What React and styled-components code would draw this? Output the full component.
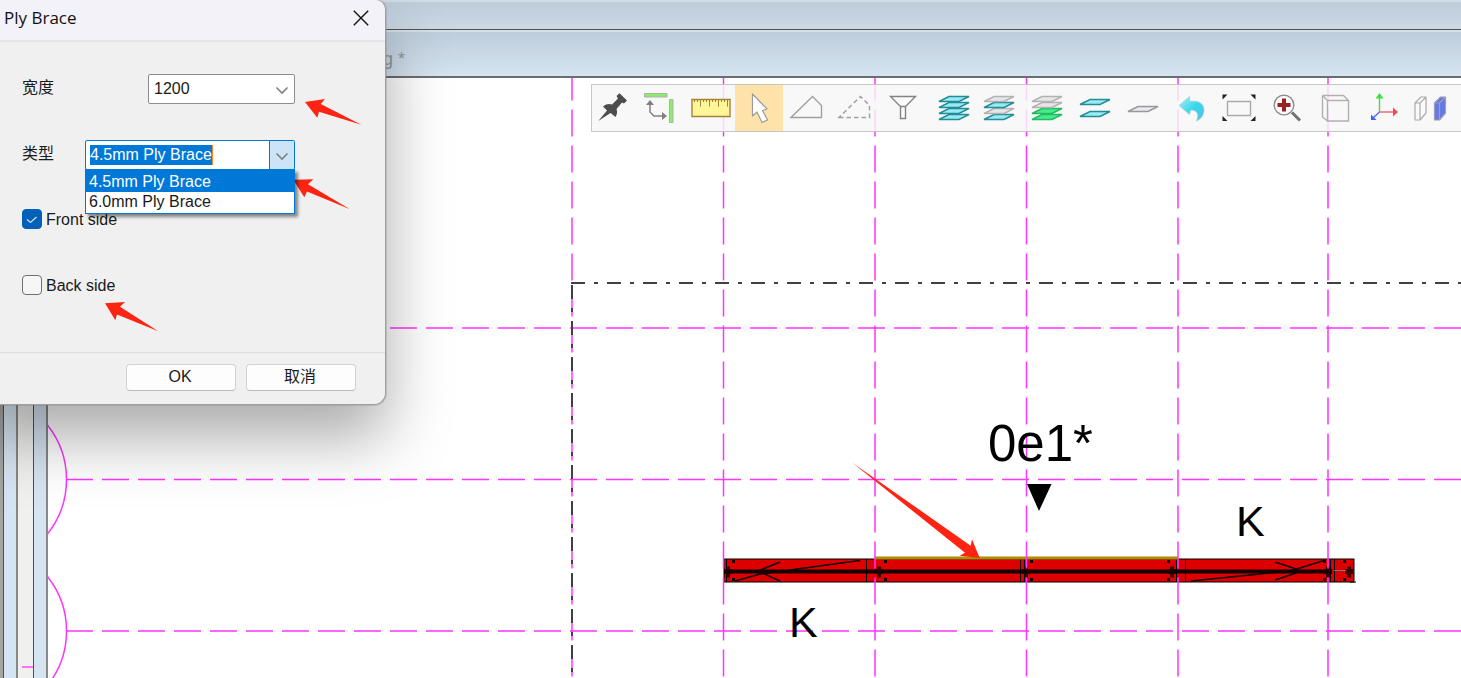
import React, { useEffect, useRef } from "react";
import styled, { createGlobalStyle } from "styled-components";

const Global = createGlobalStyle`
  * { box-sizing: border-box; }
  body { margin: 0; overflow: hidden; background: #fff; }
  body, button, input, select {
    font-family: "Liberation Sans", "Noto Sans CJK SC", sans-serif;
    font-size: 16px;
    line-height: 20px;
    color: #1a1a1a;
  }
`;

const Page = styled.main`
  position: relative;
  display: flex;
  flex-direction: column;
  height: 100vh;
  overflow: hidden;
`;

const OuterBar = styled.div`
  height: 30px;
  border-top: 2px solid #d3dbe3;
  border-bottom: 1px solid #4f5357;
  background: linear-gradient(#becddb, #ccd9e5);
`;

const DocumentBar = styled.header`
  display: flex;
  align-items: flex-end;
  height: 48px;
  padding: 0 0 5px 383px;
  border-top: 2px solid #d6dfe8;
  border-bottom: 2px solid #6b6e70;
  background: linear-gradient(#becddb, #d6e4f1);
  color: #93979d;
  font-size: 18px;
  line-height: 24px;
`;

const Body = styled.div`
  display: flex;
  flex: 1;
  min-height: 0;
`;

const Edge = styled.div`
  width: 3px;
  background: #a3a4a1;
`;

const Rail = styled.div`
  width: ${(p) => p.$width}px;
  border-left: 1px solid #4c5054;
  border-right: ${(p) => p.$right}px solid #858886;
  background: #d5e4f1;
`;

const Gutter = styled.div`
  display: flex;
  flex-direction: column;
  justify-content: flex-end;
  align-items: flex-end;
  width: 15px;
  padding-bottom: 10px;
  background: #f0f0ee;
`;

const GutterMark = styled.div`
  width: 11px;
  height: 2px;
  background: #ff70ff;
`;

const Canvas = styled.section`
  position: relative;
  flex: 1;
  min-width: 0;
  background: #fff;
`;

const Drawing = styled.svg`
  position: absolute;
  inset: 0;
  width: 100%;
  height: 100%;
  font-family: "Liberation Sans", sans-serif;
`;

const Toolbar = styled.div`
  position: absolute;
  top: 6px;
  left: 543px;
  right: -1px;
  display: flex;
  height: 48px;
  padding: 1px 0;
  overflow: hidden;
  background: rgba(247, 247, 247, 0.84);
  box-shadow: inset 0 0 0 1px #c6c6c6;
`;

const ToolButton = styled.button`
  flex: none;
  width: 48px;
  height: 46px;
  padding: 0;
  border: 0;
  background: ${(p) => (p.$active ? "#ffe2a9" : "transparent")};
  svg { display: block; }
`;

const Dialog = styled.form`
  position: absolute;
  top: 0;
  left: -24px;
  width: 410px;
  padding-left: 24px;
  border: solid #a0a0a0;
  border-width: 0 1px 1px 0;
  border-radius: 0 10px 12px 0;
  background: #f0f0f0;
  box-shadow: 0 0 0 1px rgba(130, 130, 130, 0.3), 0 32px 64px rgba(0, 0, 0, 0.34);
`;

const TitleBar = styled.div`
  display: flex;
  align-items: center;
  justify-content: space-between;
  height: 42px;
  padding: 0 16px 5px 4px;
  border-bottom: 2px solid #e5e5e7;
  border-radius: 0 10px 0 0;
  background: #f3f2f9;
`;

const Title = styled.h1`
  margin: 0;
  font: 400 17px/24px "Open Sans", sans-serif;
  color: #111;
`;

const CloseButton = styled.button`
  display: flex;
  padding: 0;
  border: 0;
  background: transparent;
`;

const Fields = styled.div`
  padding: 14px 90px 32px 22px;
`;

const FieldRow = styled.div`
  display: flex;
  align-items: center;
  justify-content: space-between;
  height: 66px;
`;

const FieldLabel = styled.label`
  padding-bottom: 3px;
`;

const SelectBox = styled.div`
  position: relative;
  width: 147px;
  height: 30px;
  svg { position: absolute; right: 6px; top: 12px; pointer-events: none; }
`;

const Select = styled.select`
  width: 100%;
  height: 100%;
  padding: 0 5px 0;
  appearance: none;
  border: 1px solid #8d8d8d;
  border-radius: 2px;
  background: #fff;
`;

const Combo = styled.div`
  position: relative;
  display: flex;
  width: 210px;
  height: 30px;
  border: 1px solid #0078d4;
  border-radius: 2px;
  background: #fff;
`;

const ComboInput = styled.input`
  flex: 1;
  min-width: 0;
  padding: 0 0 0 4px;
  border: 0;
  outline: 0;
  background: transparent;
  &::selection { background: #0078d7; color: #fff; }
`;

const Caret = styled.span`
  position: absolute;
  left: 126px;
  top: 4px;
  width: 1px;
  height: 20px;
  background: #ff8728;
`;

const ComboButton = styled.button`
  display: flex;
  align-items: center;
  justify-content: center;
  width: 25px;
  padding: 2px 0 0;
  border: 0;
  border-left: 1px solid #0078d4;
  background: #cce4f7;
`;

const Options = styled.ul`
  position: absolute;
  z-index: 1;
  top: 28px;
  left: -1px;
  right: -1px;
  margin: 0;
  padding: 0;
  border: 1px solid #0078d7;
  background: #fff;
  box-shadow: 3px 3px 3px rgba(0, 0, 0, 0.45);
  list-style: none;
`;

const Option = styled.li`
  padding: ${(p) => (p.$active ? "2px 3px 0" : "0 3px 1px")};
  background: ${(p) => (p.$active ? "#0078d7" : "#fff")};
  color: ${(p) => (p.$active ? "#fff" : "#1a1a1a")};
`;

const CheckLabel = styled.label`
  display: flex;
  align-items: center;
  gap: 4px;
  height: 66px;
  padding-bottom: 4px;
`;

const CheckText = styled.span`
  padding-top: 2px;
`;

const Checkbox = styled.input`
  width: 20px;
  height: 20px;
  margin: 0;
  appearance: none;
  border: 1px solid #6f6f6f;
  border-radius: 4px;
  background: #f6f6f6;
  &:checked {
    border-color: #005fb8;
    background: #005fb8;
  }
`;

const CheckBoxWrap = styled.span`
  position: relative;
  display: flex;
  svg { position: absolute; left: 0; top: 0; pointer-events: none; }
`;

const Footer = styled.div`
  display: flex;
  justify-content: flex-end;
  gap: 10px;
  padding: 11px 29px 13px 0;
  border-top: 1px solid #dcdcdc;
`;

const DialogButton = styled.button`
  width: 110px;
  height: 27px;
  padding: 0 2px 1px 0;
  border: 1px solid #d2d2d2;
  border-bottom-color: #bdbdbd;
  border-radius: 4px;
  background: #fdfdfd;
`;

const Annotations = styled.svg`
  position: absolute;
  inset: 0;
  width: 100%;
  height: 100%;
  pointer-events: none;
  fill: #ff2312;
`;

const Chevron = () => (
  <svg width="14" height="9" viewBox="0 0 14 9" fill="none" stroke="#808080" strokeWidth="1.6">
    <path d="M1.500 1.500 7 7 12.500 1.500" />
  </svg>
);

const TEAL = ["#9be9f3", "#238d96"];
const GREY = ["#e6e6e8", "#b3b3b3"];
const GREEN = ["#3ff08a", "#25b862"];

const Sheet = ({ x = 9, y, tone }) => (
  <path d={`M${x} ${y + 5}L${x + 10} ${y}H${x + 30}L${x + 20} ${y + 5}Z`} fill={tone[0]} stroke={tone[1]} strokeWidth="1.4" />
);

const Stack = ({ x, tones }) => tones.map((tone, i) => ({ tone, i })).reverse().map(({ tone, i }) => (
  <Sheet key={i} x={x} y={11.5 + i * 6} tone={tone} />
));

const rulerTicks = Array.from({ length: 12 }, (_, i) => `M${7.5 + i * 3} 14V${i % 3 === 2 ? 21.5 : 17}`).join("");

const tools = [
  ["Pin", <path d="M7.3 36 16 25.5 12 21.5Q16 18 21 19.5L27 13.500 25.500 11 28.500 8.300 36 15.500 33 18.500 31 17.500 25.500 24Q27 28 24.500 32L19.500 28Z" fill="#4d4d4d" />],
  ["Align", <g>
    <path d="M5.500 8.500h22.500v3.500h-22.500zM30.500 14.500h3.500v23h-3.500z" fill="#8ced68" stroke="#a9b5a5" />
    <path d="M11 19v8l4 4h9" fill="none" stroke="#808080" strokeWidth="1.5" />
    <path d="M7 20 11 15 15 20ZM23 27 28 31 23 35Z" fill="#808080" />
  </g>],
  ["Measure", <g>
    <path d="M5 14.500H43V31.500H5Z" fill="#fff797" stroke="#a5813b" strokeWidth="1.400" />
    <path d={rulerTicks} stroke="#a5813b" fill="none" />
  </g>],
  ["Select", <path d="M17.500 9V31L22 27 27 37.500 32.500 35 27.500 25.500 32 24Z" fill="#fff" stroke="#9b9b9b" strokeWidth="1.200" strokeLinejoin="round" />],
  ["Shape", <path d="M8 32.500 29.500 11.500 38.500 20.500V32.500Z" fill="none" stroke="#a0a0a0" strokeWidth="1.400" />],
  ["Dashed shape", <path d="M8 32.500H38.500V20.500L29.500 11.500Z" fill="none" stroke="#a0a0a0" strokeWidth="1.500" strokeDasharray="4.500 3" />],
  ["Filter", <path d="M11.500 11.500H36.500L26.500 21.500V33.500H21.500V21.500ZM21.500 21.500H26.500" fill="#fbfbfb" stroke="#838383" strokeWidth="1.400" />],
  ["All layers", <Stack x={12} tones={[TEAL, TEAL, TEAL, TEAL]} />],
  ["Alternate layers", <Stack x={9} tones={[GREY, TEAL, GREY, TEAL]} />],
  ["Lower layers", <Stack x={9} tones={[GREY, GREY, GREEN, GREEN]} />],
  ["Two layers", <g><Sheet y={14.500} tone={TEAL} /><Sheet y={26.500} tone={TEAL} /></g>],
  ["One layer", <Sheet y={21.500} tone={["#e9e9ee", "#999"]} />],
  ["Undo", <g>
    <defs><linearGradient id="undo" x1="0" y1="0" x2="1" y2="1"><stop stopColor="#b5eff7" /><stop offset=".5" stopColor="#36d9ec" /><stop offset="1" stopColor="#55bfe0" /></linearGradient></defs>
    <path d="M12 20.500 22.500 11.500 23 16.500C32 15 37 19 37 25 37 30 34 34 29.500 36 32.500 29 30 25 23.500 25L22.500 29.500Z" fill="url(#undo)" stroke="#a6cfdf" strokeWidth=".8" strokeLinejoin="round" />
  </g>],
  ["Fit to window", <g>
    <path d="M12.500 16.500H35.500V30.500H12.500Z" fill="none" stroke="#aaa" strokeWidth="1.400" />
    <path d="M7.500 9.500h5l-5 5ZM40.500 9.500v5l-5-5ZM7.500 36v-5l5 5ZM40.500 36h-5l5-5Z" fill="#222" />
  </g>],
  ["Zoom in", <g>
    <path d="M29 27.500 37 35.500" stroke="#707070" strokeWidth="3" />
    <circle cx="21" cy="20" r="9.800" fill="#fafafa" stroke="#888" strokeWidth="1.300" />
    <path d="M21 13.500V26.500M14.500 20H27.500" stroke="#9c2020" strokeWidth="4" />
  </g>],
  ["Box view", <path d="M16.500 15.500H37.500V36H16.500ZM11.500 10.500H32.500L37.500 15.500M11.500 10.500V32L16.500 36M11.500 10.500 16.500 15.500" fill="none" stroke="#b0b0b0" strokeWidth="1.400" />],
  ["Axes", <g strokeWidth="1.400">
    <path d="M20.500 27V12" stroke="#48d94c" /><path d="M16.500 13.500 20.500 8 24.500 13.500Z" fill="#39e442" />
    <path d="M20.500 27H35" stroke="#ee5f6d" /><path d="M34 22.500 39 27 34 31.500Z" fill="#f54556" />
    <path d="M20.500 27 14 33" stroke="#4a6cf0" /><path d="M12 29.500V35H17.500Z" fill="#4062ee" />
  </g>],
  ["Panels", <g strokeWidth="1.200" strokeLinejoin="round">
    <path d="M8 18 14 12H19V28L13 35H8ZM8 18H13V35M13 18 19 12" fill="#fafafa" stroke="#aaa" />
    <path d="M27.500 18 33.500 12H38.500V28L32.500 35H27.500ZM27.500 18H32.500V35M32.500 18 38.500 12" fill="#6579e4" stroke="#9a9eb8" />
  </g>],
];

const columns = [572, 723.5, 875, 1026.5, 1178, 1328];

const beamJoints = [728, 879, 1026, 1172, 1328, 1349];
const beamBolts = [733, 885, 1031, 1168, 1324, 1344];

function Plan() {
  return (
    <Drawing aria-label="Plan">
      <g transform="translate(-48 -78)">
        <rect x="724" y="559" width="630" height="23" fill="#de0000" stroke="#000" />
        <path d="M724 571.500H1331" stroke="#140000" strokeWidth="4" />
        <path d="M726.500 559V582M866.500 559V582M1020.500 559V582M1024.500 559V582M1176.500 559V582M1185.500 559V582M1330.500 559V582M1334.500 559V582" stroke="#000" />
        <path d="M735 581 760 574 860 560.500M758 571 780 562M762 573 780 581M1191 581 1290 571 1324 560.500M1275 562 1296 569M1275 580 1296 573" fill="none" stroke="#100000" strokeWidth="1.500" />
        {beamJoints.map((x) => <path key={x} d={`M${x - 2} 566.500h4v11h-4zM${x - 4} 569h8v5h-8z`} fill="#160000" opacity=".8" />)}
        {beamBolts.map((x) => <path key={x} d={`M${x - 1} 560h3v3h-3zM${x - 1} 578h3v3h-3z`} fill="#100000" />)}
        <path d="M1334 570.500H1346" stroke="#777" />
        <path d="M1350 582H1356" stroke="#000" />
        <path d="M875 558H1178" stroke="#b18a08" strokeWidth="3" />
        <g fill="none" stroke="#ff35ff" strokeWidth="1.500">
          <g strokeDasharray="27 9">
            {columns.map((x) => <path key={x} d={`M${x} 73.500V3000`} />)}
            {[328, 479.5, 631].map((y) => <path key={y} d={`M66 ${y}H4000`} />)}
          </g>
          <path d="M47 424.500A87.300 87.300 0 0 1 47 534.500M47 576A87.300 87.300 0 0 1 47 686" />
        </g>
        <path d="M571 283H4000M572 285V3000" fill="none" stroke="#404040" strokeWidth="2" strokeDasharray="14 9 4 9" />
        <path d="M1027 484H1051.500L1039 511Z" />
        <text x="988" y="461" fontSize="51">0e1*</text>
        <text x="789" y="637" fontSize="43">K</text>
        <text x="1236" y="536" fontSize="43">K</text>
      </g>
    </Drawing>
  );
}

function PlyBraceDialog() {
  const typeRef = useRef(null);
  useEffect(() => {
    typeRef.current.focus();
    typeRef.current.select();
  }, []);
  return (
    <Dialog role="dialog" aria-labelledby="dialog-title" onSubmit={(e) => e.preventDefault()}>
      <TitleBar>
        <Title id="dialog-title">Ply Brace</Title>
        <CloseButton type="button" aria-label="Close">
          <svg width="16" height="16" viewBox="0 0 16 16" stroke="#111" strokeWidth="1.400"><path d="M.8.8 15.200 15.200M15.200.8.8 15.200" /></svg>
        </CloseButton>
      </TitleBar>
      <Fields>
        <FieldRow>
          <FieldLabel htmlFor="width">宽度</FieldLabel>
          <SelectBox>
            <Select id="width" defaultValue="1200"><option>1200</option></Select>
            <Chevron />
          </SelectBox>
        </FieldRow>
        <FieldRow>
          <FieldLabel htmlFor="type">类型</FieldLabel>
          <Combo>
            <ComboInput id="type" ref={typeRef} role="combobox" aria-expanded="true" aria-controls="types" autoComplete="off" spellCheck="false" defaultValue="4.5mm Ply Brace" />
            <Caret />
            <ComboButton type="button" aria-label="Show types"><Chevron /></ComboButton>
            <Options id="types" role="listbox">
              <Option role="option" aria-selected="true" $active>4.5mm Ply Brace</Option>
              <Option role="option" aria-selected="false">6.0mm Ply Brace</Option>
            </Options>
          </Combo>
        </FieldRow>
        <CheckLabel>
          <CheckBoxWrap>
            <Checkbox type="checkbox" defaultChecked />
            <svg width="20" height="20" fill="none" stroke="#cfe2f5" strokeWidth="1.300"><path d="M5 10.500 8.500 13.500 14.500 8" /></svg>
          </CheckBoxWrap>
          <CheckText>Front side</CheckText>
        </CheckLabel>
        <CheckLabel>
          <CheckBoxWrap><Checkbox type="checkbox" /></CheckBoxWrap>
          <CheckText>Back side</CheckText>
        </CheckLabel>
      </Fields>
      <Footer>
        <DialogButton type="submit">OK</DialogButton>
        <DialogButton type="button">取消</DialogButton>
      </Footer>
    </Dialog>
  );
}

export default function App() {
  return (
    <>
      <Global />
      <Page>
        <OuterBar />
        <DocumentBar>g *</DocumentBar>
        <Body>
          <Edge />
          <Rail $width={15} $right={2} />
          <Gutter><GutterMark /></Gutter>
          <Rail $width={15} $right={2} />
          <Canvas>
            <Plan />
            <Toolbar role="toolbar" aria-label="View tools">
              {tools.map(([name, icon]) => (
                <ToolButton key={name} type="button" aria-label={name} $active={name === "Select"}>
                  <svg width="48" height="46" fill="none">{icon}</svg>
                </ToolButton>
              ))}
            </Toolbar>
          </Canvas>
        </Body>
        <PlyBraceDialog />
        <Annotations aria-hidden="true">
          <path d="M305 102 325 99 320.700 104 361.300 124.700 319 111.700 317.300 117.700Z" />
          <path d="M293.300 179.700 313.300 179.300 308 184.300 350 209.300 307 191.500 304.300 197.300Z" />
          <path d="M105 303.300 125 302 120 306.700 158.300 331.300 117 314.500 115.300 320.300Z" />
          <path d="M852 462.500 970.700 545.700 972 539.300 979.700 558 959.700 555.700 965 552.700Z" />
        </Annotations>
      </Page>
    </>
  );
}
